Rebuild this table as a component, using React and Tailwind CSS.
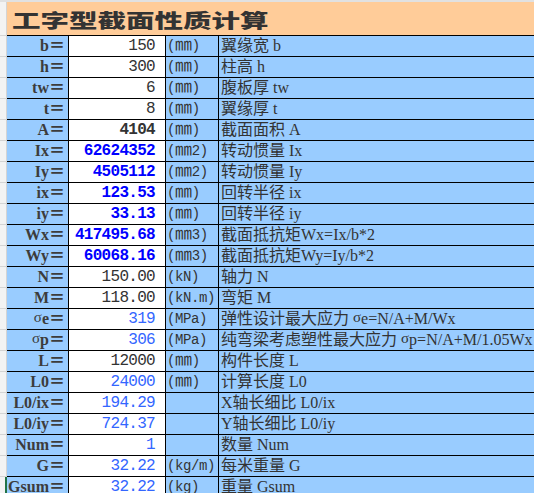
import React from 'react';

const rows = [
    { label: 'b', value: '150', unit: '(㎜)', desc: '翼缘宽 b', tone: 'input' },
    { label: 'h', value: '300', unit: '(㎜)', desc: '柱高 h', tone: 'input' },
    { label: 'tw', value: '6', unit: '(㎜)', desc: '腹板厚 tw', tone: 'input' },
    { label: 't', value: '8', unit: '(㎜)', desc: '翼缘厚 t', tone: 'input' },
    { label: 'A', value: '4104', unit: '(㎜)', desc: '截面面积 A', tone: 'strong' },
    { label: 'Ix', value: '62624352', unit: '(㎜2)', desc: '转动惯量 Ix', tone: 'calc' },
    { label: 'Iy', value: '4505112', unit: '(㎜2)', desc: '转动惯量 Iy', tone: 'calc' },
    { label: 'ix', value: '123.53', unit: '(㎜)', desc: '回转半径 ix', tone: 'calc' },
    { label: 'iy', value: '33.13', unit: '(㎜)', desc: '回转半径 iy', tone: 'calc' },
    { label: 'Wx', value: '417495.68', unit: '(㎜3)', desc: '截面抵抗矩Wx=Ix/b*2', tone: 'calc' },
    { label: 'Wy', value: '60068.16', unit: '(㎜3)', desc: '截面抵抗矩Wy=Iy/b*2', tone: 'calc' },
    { label: 'N', value: '150.00', unit: '(kN)', desc: '轴力 N', tone: 'input' },
    { label: 'M', value: '118.00', unit: '(kN.m)', desc: '弯矩 M', tone: 'input' },
    { sigma: 'e', value: '319', unit: '(MPa)', desc: '弹性设计最大应力 ', formula: 'e=N/A+M/Wx', tone: 'result' },
    { sigma: 'p', value: '306', unit: '(MPa)', desc: '纯弯梁考虑塑性最大应力 ', formula: 'p=N/A+M/1.05Wx', tone: 'result' },
    { label: 'L', value: '12000', unit: '(㎜)', desc: '构件长度 L', tone: 'input' },
    { label: 'L0', value: '24000', unit: '(㎜)', desc: '计算长度 L0', tone: 'result' },
    { label: 'L0/ix', value: '194.29', unit: '', desc: 'X轴长细比 L0/ix', tone: 'result' },
    { label: 'L0/iy', value: '724.37', unit: '', desc: 'Y轴长细比 L0/iy', tone: 'result' },
    { label: 'Num', value: '1', unit: '', desc: '数量 Num', tone: 'result' },
    { label: 'G', value: '32.22', unit: '(kg/m)', desc: '每米重量 G', tone: 'result' },
    { label: 'Gsum', value: '32.22', unit: '(kg)', desc: '重量 Gsum', tone: 'result', active: true },
];

const toneClass = {
    input: 'text-[#333333]',
    strong: 'text-[#333333] font-bold',
    calc: 'text-[#0000ff] font-bold',
    result: 'text-[#3366ff]',
};

function Sigma() {
    return <span className="relative -top-[2px] text-[15px] font-normal font-['Liberation_Serif','Noto_Sans_CJK_SC',serif]">σ</span>;
}

// ㎜ comes from the CJK font and looks tiny next to the mono parens, so bump it
function Unit({ text }) {
    const parts = text.split('㎜');
    if (parts.length === 1) return <span>{text}</span>;
    return (
        <span>
            {parts[0]}
            <span className="text-[17px] leading-none">㎜</span>
            {parts[1]}
        </span>
    );
}

function Row({ row }) {
    return (
        <div className="flex h-[21px]">
            <div
                className={
                    'w-[7px] shrink-0 bg-[#f3f3f3] border-b border-[#d4d4d4] ' +
                    (row.active ? 'border-r-2 border-r-[#217346]' : 'border-r border-r-[#d4d4d4]')
                }
            />
            <div className="flex flex-1 border-b border-black bg-[#99ccff]">
                <div className="w-[62px] shrink-0 border-r border-black flex items-center justify-end pr-[3px] text-[16px] font-bold text-[#3c3c3c] font-['Liberation_Serif','Noto_Sans_CJK_SC',serif] whitespace-nowrap">
                    <span>
                        {row.sigma ? (
                            <>
                                <Sigma />
                                {row.sigma}＝
                            </>
                        ) : (
                            <>{row.label}＝</>
                        )}
                    </span>
                </div>
                <div
                    className={
                        "w-[97px] shrink-0 bg-white border-r border-black flex items-center justify-end pr-[10px] text-[16px] tracking-[-0.7px] font-['Liberation_Mono',monospace] " +
                        toneClass[row.tone]
                    }
                >
                    {row.value}
                </div>
                <div className="w-[53px] shrink-0 border-r border-black flex items-center pl-[1px] text-[14px] tracking-[-0.4px] text-[#333333] font-['Liberation_Mono','Noto_Sans_CJK_SC',monospace] whitespace-nowrap">
                    <Unit text={row.unit} />
                </div>
                <div className="flex-1 min-w-0 overflow-hidden flex items-center pl-[2px] text-[16px] text-[#333333] font-['Liberation_Serif','Noto_Sans_CJK_SC',serif] whitespace-nowrap">
                    <span>
                        {row.desc}
                        {row.sigma && (
                            <>
                                <Sigma />
                                {row.formula}
                            </>
                        )}
                    </span>
                </div>
            </div>
        </div>
    );
}

export default function App() {
    return (
        <div className="w-[534px] h-[493px] overflow-hidden bg-white flex flex-col">
            <div className="h-[2px] shrink-0 bg-[#e1e1e1]" />
            <div className="flex h-[34px] shrink-0">
                <div className="w-[7px] shrink-0 bg-[#f3f3f3] border-r border-b border-[#d4d4d4]" />
                <div className="flex-1 bg-[#ffcc99] border-b border-black flex items-center pl-[5px] pt-[3px] overflow-hidden">
                    <span className="inline-block origin-left scale-x-[1.5] text-[19px] font-black text-[#333333] whitespace-nowrap font-['Noto_Sans_CJK_SC',sans-serif]">
                        工字型截面性质计算
                    </span>
                </div>
            </div>
            {rows.map((row) => (
                <Row key={row.label || row.sigma} row={row} />
            ))}
        </div>
    );
}
